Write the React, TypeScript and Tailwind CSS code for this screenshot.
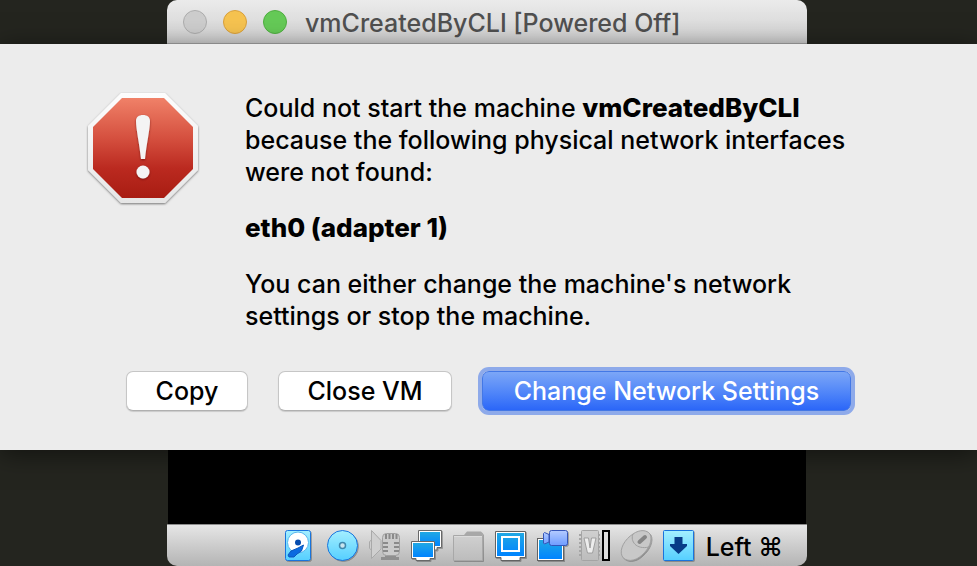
import React from "react";

function StopIcon() {
  return (
    <svg viewBox="0 3 120 120" className="h-[120px] w-[120px] shrink-0" role="img" aria-label="Error">
      <defs>
        <linearGradient id="stopRed" x1="0" y1="0" x2="0" y2="1">
          <stop offset="0" stopColor="#f08168" />
          <stop offset="0.4" stopColor="#d5503f" />
          <stop offset="0.7" stopColor="#bb2a20" />
          <stop offset="1" stopColor="#a81c12" />
        </linearGradient>
        <linearGradient id="stopRim" x1="0" y1="0" x2="0" y2="1">
          <stop offset="0" stopColor="#fdfdfd" />
          <stop offset="1" stopColor="#e6e6e6" />
        </linearGradient>
        <filter id="stopShadow" x="-10%" y="-10%" width="120%" height="120%">
          <feDropShadow dx="0" dy="1" stdDeviation="1" floodColor="#000" floodOpacity="0.5" />
        </filter>
        <filter id="markShadow" x="-20%" y="-10%" width="140%" height="120%">
          <feDropShadow dx="0" dy="1" stdDeviation="0.8" floodColor="#500" floodOpacity="0.6" />
        </filter>
      </defs>
      <path d="M37 4H81L114 37V81L81 114H37L4 81V37Z" fill="url(#stopRim)" filter="url(#stopShadow)" />
      <path d="M38 9H80L109 38V80L80 109H38L9 80V38Z" fill="url(#stopRed)" />
      <g fill="#f4f4f4" filter="url(#markShadow)">
        <path d="M52 32C52 28 55 26 59 26S66 28 66 32C66 40 62.500 55 61 70H57C55.500 55 52 40 52 32Z" />
        <circle cx="59" cy="83" r="6.500" />
      </g>
    </svg>
  );
}

function BlueDefs() {
  return (
    <svg className="absolute h-0 w-0" aria-hidden="true">
      <defs>
        <linearGradient id="cyan" x1="0" y1="0" x2="0" y2="1">
          <stop offset="0" stopColor="#a4efff" />
          <stop offset="1" stopColor="#55cfff" />
        </linearGradient>
        <linearGradient id="screen" x1="0" y1="0" x2="0" y2="1">
          <stop offset="0" stopColor="#20a8e4" />
          <stop offset="1" stopColor="#0084ff" />
        </linearGradient>
        <linearGradient id="camera" x1="0" y1="0" x2="0" y2="1">
          <stop offset="0" stopColor="#b4cbff" />
          <stop offset="1" stopColor="#6e9cff" />
        </linearGradient>
        <linearGradient id="gray" x1="0" y1="0" x2="0" y2="1">
          <stop offset="0" stopColor="#d0d0d0" />
          <stop offset="1" stopColor="#bcbcbc" />
        </linearGradient>
      </defs>
    </svg>
  );
}

const iconShape = "block h-8 w-8 drop-shadow-[1px_1px_0px_#00000040]";

function DiskIcon() {
  return (
    <svg viewBox="0 0 32 32" className={iconShape}>
      <rect x="1.500" y="1.500" width="25" height="30" rx="2" fill="url(#cyan)" stroke="#1974dd" />
      <circle cx="14" cy="13.500" r="10.500" fill="#fff" stroke="#56b7ee" />
      <circle cx="14" cy="13.500" r="3" fill="#064cae" />
      <path d="M19.500 16L17.500 22L13 25L10 28H5L4 26L7 22L14 19Z" fill="#0b6be0" stroke="#0b57bd" strokeLinejoin="round" />
    </svg>
  );
}

function DiscIcon() {
  return (
    <svg viewBox="0 0 32 32" className={iconShape}>
      <circle cx="16.500" cy="16.500" r="15" fill="url(#cyan)" stroke="#1974dd" />
      <circle cx="16.500" cy="16.500" r="3" fill="#c9e4ee" stroke="#3f88ad" strokeWidth="1.500" />
    </svg>
  );
}

function AudioIcon() {
  return (
    <svg viewBox="0 0 32 32" className="block h-8 w-8">
      <path d="M4 11.500H2.500L1.500 13V19L2.500 20.500H4Z" fill="#cfcfcf" stroke="#a9a9a9" />
      <path d="M3.500 1.500L13 11.500V20L3.500 29.500Z" fill="#cfcfcf" stroke="#a9a9a9" />
      <path d="M17 25H28V28H31V31H13V28H17Z" fill="#8f8f8f" />
      <rect x="14.500" y="4.500" width="17" height="22" rx="4" fill="#cbcbcb" stroke="#a0a0a0" />
      <path d="M18 5V10M21.500 5V10M25 5V10M28.500 5V10M15 14H20M26 14H31M15 18H20M26 18H31M15 22H20M26 22H31" stroke="#8a8a8a" strokeWidth="2" />
    </svg>
  );
}

function NetworkIcon() {
  return (
    <svg viewBox="0 0 32 32" className={iconShape}>
      <path d="M8.500 1.500H31.500V18.500H27V21H13V18.500H8.500Z" fill="#fff" stroke="#686868" />
      <rect x="10" y="3" width="20" height="14" fill="url(#screen)" />
      <path d="M1.500 12.500H24.500V29.500H20V31.500H6V29.500H1.500Z" fill="#fff" stroke="#686868" />
      <rect x="3" y="14" width="20" height="14" fill="url(#screen)" />
    </svg>
  );
}

function FolderIcon() {
  return (
    <svg viewBox="0 0 32 32" className={iconShape}>
      <path d="M12 6L15 2.500H29L31 5V12H12Z" fill="#a8a8a8" />
      <path d="M1.500 6.500H30.500V31.500H1.500Z" fill="url(#gray)" stroke="#a8a8a8" />
      <path d="M2 7.500H30" stroke="#dcdcdc" />
    </svg>
  );
}

function DisplayIcon() {
  return (
    <svg viewBox="0 0 32 32" className={iconShape}>
      <path d="M1.500 2.500H31.500V28.500H26V31.500H7V28.500H1.500Z" fill="#fff" stroke="#626262" />
      <rect x="3" y="4" width="27" height="23" fill="url(#screen)" />
      <rect x="8" y="8" width="17" height="14" fill="none" stroke="#fff" strokeWidth="2" />
    </svg>
  );
}

function RecordingIcon() {
  return (
    <svg viewBox="0 0 32 32" className={iconShape}>
      <rect x="1.500" y="9.500" width="26" height="22" fill="#fff" stroke="#626262" />
      <rect x="3" y="11" width="23" height="19" fill="url(#screen)" />
      <path d="M13 5.500L8.500 3.500L7.500 4.500V14L8.500 15L13 13Z" fill="url(#camera)" stroke="#3455b8" />
      <rect x="13.500" y="1.500" width="18" height="15" rx="2" fill="url(#camera)" stroke="#3455b8" />
    </svg>
  );
}

function FeaturesIcon() {
  return (
    <svg viewBox="0 0 32 32" className="block h-8 w-8">
      <path d="M1 6H22M1 10H22M1 14H22M1 18H22M1 22H22M1 26H22" stroke="#a6a6a6" strokeWidth="2" />
      <rect x="3.500" y="1.500" width="17" height="30" rx="1" fill="url(#gray)" stroke="#a4a4a4" />
      <path d="M6 9H10.500L12 19L13.500 9H18L14.500 24H9.500Z" fill="#ededed" stroke="#929292" strokeWidth="0.800" />
      <rect x="25" y="2" width="6" height="29" fill="#dedede" stroke="#000" strokeWidth="2" />
    </svg>
  );
}

function MouseIcon() {
  return (
    <svg viewBox="0 0 32 32" className={iconShape}>
      <g fill="#c8c8c8" stroke="#a0a0a0">
        <path d="M13 5C20 0 27 1 30 5C33 11 29 20 22 26C15 33 5 33 2 27C-1 20 5 10 13 5Z" />
        <path d="M13 5C10 12 16 21 29 18" fill="none" />
      </g>
      <path d="M19.500 13L25 8" stroke="#858585" strokeWidth="4" strokeLinecap="round" />
    </svg>
  );
}

function KeyboardIcon() {
  return (
    <svg viewBox="0 0 32 32" className={iconShape}>
      <rect x="1.500" y="1.500" width="30" height="30" rx="1" fill="url(#cyan)" stroke="#1974dd" />
      <path d="M12.500 8H20.500V15H25V17L16.500 25L8 17V15H12.500Z" fill="#073b88" />
    </svg>
  );
}

const indicators = [
  { label: "Hard disks", Icon: DiskIcon },
  { label: "Optical drives", Icon: DiscIcon },
  { label: "Audio", Icon: AudioIcon },
  { label: "Network", Icon: NetworkIcon },
  { label: "Shared folders", Icon: FolderIcon },
  { label: "Display", Icon: DisplayIcon },
  { label: "Recording", Icon: RecordingIcon },
  { label: "Features", Icon: FeaturesIcon },
  { label: "Mouse integration", Icon: MouseIcon },
  { label: "Keyboard", Icon: KeyboardIcon },
];

function TitleBar() {
  return (
    <header className="flex h-11 items-center rounded-t-[10px] border-b border-[#a8a8a8] bg-linear-to-b from-[#ebebeb] to-[#d2d2d2] pl-4">
      <div className="flex gap-4">
        <button aria-label="Close" className="h-6 w-6 rounded-full border border-[#adadad] bg-[#cdcdcd]" />
        <button aria-label="Minimize" className="h-6 w-6 rounded-full border border-[#d9a03c] bg-[#f6c350]" />
        <button aria-label="Zoom" className="h-6 w-6 rounded-full border border-[#4fae40] bg-[#65ca57]" />
      </div>
      <h1 className="pt-0.5 pl-[18px] text-[25px] leading-8 font-medium whitespace-nowrap text-[#505050]">
        vmCreatedByCLI [Powered Off]
      </h1>
    </header>
  );
}

function StatusBar() {
  return (
    <footer className="flex h-[42px] items-center justify-end rounded-b-[10px] border-t border-[#8c8c8c] bg-linear-to-b from-[#e6e6e6] to-[#b4b4b4] pr-6">
      <BlueDefs />
      <div className="flex gap-[10px] pr-3 pb-px">
        {indicators.map(({ label, Icon }) => (
          <button key={label} aria-label={label}>
            <Icon />
          </button>
        ))}
      </div>
      <span className="pt-0.5 text-[25px] leading-8 font-medium whitespace-nowrap text-black">Left ⌘</span>
    </footer>
  );
}

const plainButton =
  "h-10 rounded-[7px] border border-[#c6c6c6] border-b-[#b0b0b0] bg-white font-medium text-black shadow-[0_1px_1px_#00000025]";

function Alert() {
  return (
    <section role="alertdialog" aria-label="Network error" className="relative bg-[#ececec] pt-12 pb-[39px] shadow-[0_4px_24px_#00000080]">
      <div className="flex items-start gap-[41px] pr-10 pl-[84px]">
        <StopIcon />
        <div className="flex flex-col gap-6 text-[25px] leading-8 font-medium text-black">
          <p>
            Could not start the machine <b className="text-[26px] font-extrabold">vmCreatedByCLI</b>
            <br />
            because the following physical network interfaces
            <br />
            were not found:
          </p>
          <p>
            <b className="text-[26px] font-extrabold">eth0 (adapter 1)</b>
          </p>
          <p>
            You can either change the machine's network
            <br />
            settings or stop the machine.
          </p>
        </div>
      </div>
      <div className="flex justify-center gap-[30px] pt-[39px] text-[25px] leading-8">
        <button className={`${plainButton} w-[122px]`}>Copy</button>
        <button className={`${plainButton} w-[174px]`}>Close VM</button>
        <button className="h-10 w-[369px] rounded-[7px] border border-[#4378e6] bg-linear-to-b from-[#7ca6f7] to-[#2b66f8] font-medium whitespace-nowrap text-white ring-4 ring-[#8eaaea]">
          Change Network Settings
        </button>
      </div>
    </section>
  );
}

export default function App() {
  return (
    <main className="flex min-h-screen flex-col bg-[#24251f] font-['Inter','DejaVu_Sans',sans-serif]">
      <div className="pr-[170px] pl-[167px]">
        <TitleBar />
      </div>
      <Alert />
      <div className="flex grow flex-col pr-[170px] pl-[167px]">
        <div className="mx-px min-h-[74px] grow bg-black" />
        <StatusBar />
      </div>
    </main>
  );
}
